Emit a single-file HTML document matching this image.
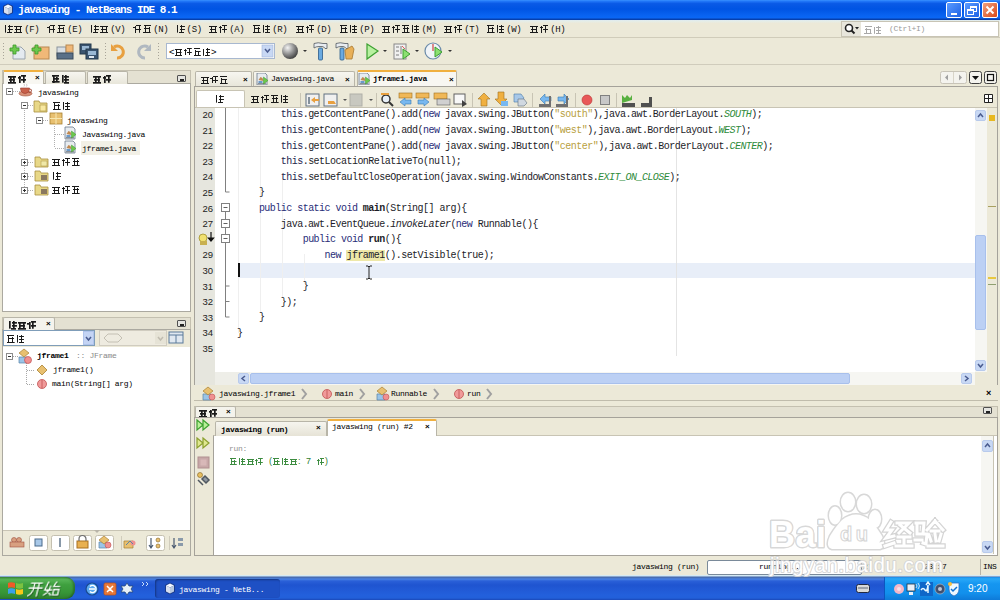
<!DOCTYPE html>
<html><head><meta charset="utf-8">
<style>
*{box-sizing:border-box;margin:0;padding:0}
html,body{width:1000px;height:600px;overflow:hidden;background:#ECE9D8;font-family:"Liberation Sans",sans-serif;font-size:10px;color:#000}
.a{position:absolute}
.t{position:absolute;white-space:pre;line-height:1}
.m{font-family:"Liberation Mono",monospace;letter-spacing:-0.31px}
/* title bar */
#title{left:0;top:0;width:1000px;height:20px;background:linear-gradient(#3A92FF 0,#2278F8 6%,#0A5AE6 18%,#0054E3 45%,#0862F0 75%,#0A66F4 88%,#0846B8 96%,#04349A 100%)}
.tbtn{top:2px;width:16px;height:16px;border:1px solid #fff;border-radius:2px;background:linear-gradient(135deg,#5A9BFF,#1E62E6)}
/* menubar */
.mi{top:24px;font-size:10px;color:#111}
/* panel */
.pbord{border:1px solid #ABA9A0;background:#fff}
.tab{height:15px;border:1px solid #B8B5A8;border-bottom:none;background:linear-gradient(#F7F6F0,#E8E6DA);border-radius:2px 2px 0 0}
.tab.act{background:#F8F7F2;border-top:2px solid #F0B040}
.code{font-family:"Liberation Mono",monospace;font-size:10px;letter-spacing:-0.53px;color:#1c1c28}
.ln{font-size:9.5px;color:#222;text-align:right;width:18px}
.kw{color:#282C78}
.str{color:#B8A040}
.it{font-style:italic;color:#2E8B3A}
.fold{width:8px;height:8px;border:1px solid #888;background:#fff}
.fold:after{content:"";position:absolute;left:1px;top:3px;width:4px;height:1px;background:#555}
.ico{position:absolute}
.g{display:inline-block;width:.9em;height:.9em;margin-right:.06em;vertical-align:-0.06em;color:transparent!important;--gc:#1a1a1a;--w:1px;background-repeat:no-repeat;background-image:linear-gradient(var(--gc),var(--gc)),linear-gradient(var(--gc),var(--gc)),linear-gradient(var(--gc),var(--gc)),linear-gradient(var(--gc),var(--gc)),linear-gradient(var(--gc),var(--gc))}
.b .g{--w:1.7px}
.gy .g{--gc:#a8a8a8}.gg .g{--gc:#3C8C40}
.g0{background-size:80% var(--w),70% var(--w),var(--w) 80%,var(--w) 60%,85% var(--w);background-position:50% 8%,60% 45%,30% 90%,75% 80%,50% 92%}
.g1{background-size:var(--w) 85%,55% var(--w),55% var(--w),var(--w) 90%,60% var(--w);background-position:15% 60%,90% 15%,90% 55%,65% 50%,95% 95%}
.g2{background-size:90% var(--w),var(--w) 70%,var(--w) 70%,70% var(--w),90% var(--w);background-position:50% 20%,25% 75%,75% 75%,50% 55%,50% 95%}
.g3{background-size:35% var(--w),var(--w) 80%,60% var(--w),var(--w) 75%,60% var(--w);background-position:5% 30%,20% 80%,95% 10%,70% 60%,95% 60%}
</style></head><body>

<!-- TITLE BAR -->
<div id="title" class="a"></div>
<svg class="a" style="left:2px;top:3px" width="12" height="13"><path d="M6 0.5l5 2.5v7l-5 2.5-5-2.5v-7z" fill="#1A3A8A"/><path d="M6 1.5l4 2-4 2-4-2z" fill="#F4F8FF"/><path d="M2 3.5l4 2v6l-4-2z" fill="#D8E0F0"/><path d="M10 3.5l-4 2v6l4-2z" fill="#B8C8E0"/></svg>
<div class="t" style="left:18px;top:5px;font-size:11px;font-weight:bold;color:#fff;letter-spacing:-0.93px;font-family:'Liberation Mono',monospace">javaswing - NetBeans IDE 8.1</div>
<div class="a tbtn" style="left:946px"><div class="a" style="left:4px;top:10px;width:6px;height:2px;background:#fff"></div></div>
<div class="a tbtn" style="left:964px"><div class="a" style="left:5px;top:3px;width:7px;height:6px;border:1px solid #fff;border-top-width:2px"></div><div class="a" style="left:2px;top:6px;width:7px;height:6px;border:1px solid #fff;border-top-width:2px;background:#3A7CF0"></div></div>
<div class="a tbtn" style="left:982px;background:linear-gradient(135deg,#F0A080,#D84818)"><svg class="a" style="left:0;top:0" width="14" height="14"><path d="M3.5 3.5l7 7 M10.5 3.5l-7 7" stroke="#fff" stroke-width="2"/></svg></div>

<!-- MENU BAR -->
<div class="a" style="left:0;top:20px;width:1000px;height:18px;background:linear-gradient(#DDEBF2 0,#E6EDE6 8%,#ECE9D8 20%);border-bottom:1px solid #D0CCBA"></div>
<div class="t mi" style="left:4px"><span class="g g1">文</span><span class="g g2">件</span><span class="m" style="font-size:9px;margin-left:1px">(F)</span></div>
<div class="t mi" style="left:47px"><span class="g g3">编</span><span class="g g0">辑</span><span class="m" style="font-size:9px;margin-left:1px">(E)</span></div>
<div class="t mi" style="left:90px"><span class="g g1">视</span><span class="g g2">图</span><span class="m" style="font-size:9px;margin-left:1px">(V)</span></div>
<div class="t mi" style="left:133px"><span class="g g3">导</span><span class="g g0">航</span><span class="m" style="font-size:9px;margin-left:1px">(N)</span></div>
<div class="t mi" style="left:176px"><span class="g g1">源</span><span class="m" style="font-size:9px;margin-left:1px">(S)</span></div>
<div class="t mi" style="left:209px"><span class="g g2">重</span><span class="g g3">构</span><span class="m" style="font-size:9px;margin-left:1px">(A)</span></div>
<div class="t mi" style="left:252px"><span class="g g0">运</span><span class="g g1">行</span><span class="m" style="font-size:9px;margin-left:1px">(R)</span></div>
<div class="t mi" style="left:296px"><span class="g g2">调</span><span class="g g3">试</span><span class="m" style="font-size:9px;margin-left:1px">(D)</span></div>
<div class="t mi" style="left:339px"><span class="g g0">分</span><span class="g g1">析</span><span class="m" style="font-size:9px;margin-left:1px">(P)</span></div>
<div class="t mi" style="left:382px"><span class="g g2">团</span><span class="g g3">队</span><span class="g g0">开</span><span class="g g1">发</span><span class="m" style="font-size:9px;margin-left:1px">(M)</span></div>
<div class="t mi" style="left:444px"><span class="g g2">工</span><span class="g g3">具</span><span class="m" style="font-size:9px;margin-left:1px">(T)</span></div>
<div class="t mi" style="left:486px"><span class="g g0">窗</span><span class="g g1">口</span><span class="m" style="font-size:9px;margin-left:1px">(W)</span></div>
<div class="t mi" style="left:530px"><span class="g g2">帮</span><span class="g g3">助</span><span class="m" style="font-size:9px;margin-left:1px">(H)</span></div>
<!-- search box -->
<div class="a" style="left:841px;top:21px;width:158px;height:16px;border:1px solid #C8C4B4;background:#fff"></div>
<div class="a" style="left:842px;top:22px;width:19px;height:14px;background:#E8E6DC"></div>
<svg class="a" style="left:842px;top:22px" width="19" height="14"><circle cx="7" cy="6" r="3.5" fill="#fff" stroke="#222" stroke-width="1.6"/><path d="M9.5 8.5l3 3" stroke="#222" stroke-width="2"/><path d="M13 5h4l-2 2.5z" fill="#222"/></svg>
<div class="t gy" style="left:864px;top:25px;font-size:9.5px;color:#999"><span class="g g0">搜</span><span class="g g1">索</span></div><div class="t m" style="left:889px;top:25px;font-size:8px;color:#999">(Ctrl+I)</div>

<!-- TOOLBAR -->
<div class="a" style="left:0;top:64px;width:1000px;height:1px;background:#D0CCBC"></div>
<svg class="a" style="left:0;top:38px" width="460" height="26" viewBox="0 0 460 26">
 <g fill="#A8A498"><rect x="3" y="5" width="1" height="1"/><rect x="3" y="8" width="1" height="1"/><rect x="3" y="11" width="1" height="1"/><rect x="3" y="14" width="1" height="1"/><rect x="3" y="17" width="1" height="1"/><rect x="3" y="20" width="1" height="1"/>
 <rect x="105" y="5" width="1" height="1"/><rect x="105" y="8" width="1" height="1"/><rect x="105" y="11" width="1" height="1"/><rect x="105" y="14" width="1" height="1"/><rect x="105" y="17" width="1" height="1"/><rect x="105" y="20" width="1" height="1"/>
 <rect x="158" y="5" width="1" height="1"/><rect x="158" y="8" width="1" height="1"/><rect x="158" y="11" width="1" height="1"/><rect x="158" y="14" width="1" height="1"/><rect x="158" y="17" width="1" height="1"/><rect x="158" y="20" width="1" height="1"/></g>
 <!-- new file -->
 <path d="M13 9h8l4 4v8h-12z" fill="#E4EAF0" stroke="#9AA4AC"/>
 <path d="M10 10h3v-3h3v3h3v3h-3v3h-3v-3h-3z" fill="#6CC84C" stroke="#3C9A2C" stroke-width="0.8"/>
 <!-- new project -->
 <rect x="34" y="9" width="15" height="12" fill="#F0B878" stroke="#B88850"/>
 <path d="M32 10h3v-3h3v3h3v3h-3v3h-3v-3h-3z" fill="#6CC84C" stroke="#3C9A2C" stroke-width="0.8"/>
 <!-- open project -->
 <rect x="57" y="9" width="9" height="9" fill="#D8DEE4" stroke="#8A949C"/>
 <rect x="66" y="7" width="7" height="7" fill="#F0B878" stroke="#B88850"/>
 <rect x="57" y="15" width="16" height="6" fill="#5A7088" stroke="#3A4A5A"/>
 <!-- save -->
 <rect x="80" y="6" width="11" height="10" fill="#3A5470" stroke="#22384C"/><rect x="82" y="8" width="7" height="4" fill="#9AB8D4"/>
 <rect x="86" y="11" width="12" height="10" fill="#3A5470" stroke="#22384C"/><rect x="88" y="13" width="8" height="4" fill="#9AB8D4"/><rect x="89" y="18" width="5" height="2" fill="#E0E8F0"/>
 <!-- undo -->
 <path d="M114 9 A6 6 0 1 1 117 20" fill="none" stroke="#E8A040" stroke-width="3"/>
 <path d="M111 6v7h7z" fill="#E8A040"/>
 <!-- redo -->
 <path d="M148 9 A6 6 0 1 0 145 20" fill="none" stroke="#B0B8C0" stroke-width="3"/>
 <path d="M151 6v7h-7z" fill="#B0B8C0"/>
 <!-- combo -->
 <rect x="166.5" y="5.5" width="108" height="15" fill="#fff" stroke="#A8B8D0"/>
 <rect x="262" y="7" width="11" height="12" fill="#C8D8F4" stroke="#A0B4D8" stroke-width="0.6"/>
 <path d="M265 11l2.5 3 2.5-3" fill="none" stroke="#4A5C90" stroke-width="1.5"/>
 <!-- globe -->
 <defs><radialGradient id="gl" cx="0.35" cy="0.3" r="0.8"><stop offset="0" stop-color="#F4F4F4"/><stop offset="0.5" stop-color="#909090"/><stop offset="1" stop-color="#303030"/></radialGradient></defs>
 <circle cx="290" cy="13" r="8" fill="url(#gl)"/>
 <path d="M303 12h4l-2 2z" fill="#333"/>
 <!-- hammer -->
 <rect x="318.5" y="10" width="4" height="12" rx="1" fill="#6AAAE0" stroke="#2A5A8A" stroke-width="0.8"/>
 <path d="M314 5.5q4-1.5 9 0h4v5h-2q-1-2-3-2h-3q-3 0-5 1.5z" fill="#E8ECF0" stroke="#505860" stroke-width="0.8"/>
 <!-- clean build -->
 <rect x="340" y="10" width="4" height="12" rx="1" fill="#6AAAE0" stroke="#2A5A8A" stroke-width="0.8"/>
 <path d="M336 5.5q4-1.5 9 0h3v5h-2q-1-2-3-2h-2q-3 0-5 1.5z" fill="#E8ECF0" stroke="#505860" stroke-width="0.8"/>
 <path d="M345 12l7-4 2 3-2 10h-6z" fill="#E8B058" stroke="#A87830" stroke-width="0.8"/>
 <!-- run -->
 <path d="M367 6l11 7-11 8z" fill="#B8F0A0" stroke="#3CA030" stroke-width="1.2"/>
 <path d="M383 12h4l-2 2z" fill="#333"/>
 <!-- test -->
 <rect x="394" y="6" width="12" height="15" fill="#F0F0F0" stroke="#888"/>
 <path d="M396 9h3 M396 13h3 M396 17h3 M401 8v8" stroke="#606060" stroke-width="0.8"/><path d="M402 8l3 3" stroke="#E06060"/>
 <path d="M403 11l7 5-7 5z" fill="#8CE070" stroke="#3CA030"/>
 <path d="M415 12h4l-2 2z" fill="#333"/>
 <!-- profile -->
 <circle cx="433" cy="13" r="8" fill="#F0F4F8" stroke="#6A8AA8" stroke-width="1.2"/>
 <path d="M433 6v7" stroke="#D04040" stroke-width="1.2"/>
 <path d="M435 9l7 5-7 5z" fill="#8CE070" stroke="#3CA030"/>
 <path d="M448 12h4l-2 2z" fill="#333"/>
</svg>
<div class="t" style="left:169px;top:47px;font-size:9.5px">&lt;<span class="g g2">默</span><span class="g g3">认</span><span class="g g0">配</span><span class="g g1">置</span>&gt;</div>

<!-- LEFT PROJECTS PANEL -->
<div class="a" style="left:2px;top:70px;width:189px;height:14px;border:1px solid #C4C0B0;border-bottom:none;background:#E4E1D2"></div>
<div class="a pbord" style="left:2px;top:83px;width:189px;height:229px"></div>
<div class="a tab act" style="left:3px;top:70px;width:41px;height:14px"></div>
<div class="a tab" style="left:45px;top:71px;width:41px;height:13px"></div>
<div class="a tab" style="left:87px;top:71px;width:41px;height:13px"></div>
<div class="b t" style="left:8px;top:74px;font-size:10px;font-weight:bold"><span class="g g2">项</span><span class="g g3">目</span></div>
<div class="t" style="left:35px;top:74px;font-size:8px;font-weight:bold">×</div>
<div class="b t" style="left:51px;top:74px;font-size:10px;font-weight:bold"><span class="g g0">文</span><span class="g g1">件</span></div>
<div class="b t" style="left:93px;top:74px;font-size:10px;font-weight:bold"><span class="g g2">服</span><span class="g g3">务</span></div>
<div class="a" style="left:177px;top:75px;width:9px;height:7px;border:1px solid #505050;border-radius:1px;background:#E4E4E0"><div class="a" style="left:2px;top:3px;width:4px;height:2px;background:#222"></div></div>
<svg class="a" style="left:2px;top:83px" width="189" height="120" viewBox="0 0 189 120">
 <g stroke="#B0B0B0" stroke-dasharray="1 1" fill="none">
  <path d="M22.5 25v82 M11 8.5h7 M26 22.5h6 M41 37.5h6 M52.5 43v22 M53 51.5h9 M53 65.5h9 M26 79.5h6 M26 93.5h6 M26 107.5h6"/>
 </g>
 <g fill="#fff" stroke="#8C8C8C" stroke-width="1">
  <rect x="4.5" y="5.5" width="6" height="6"/><rect x="19.5" y="19.5" width="6" height="6"/><rect x="34.5" y="34.5" width="6" height="6"/>
  <rect x="19.5" y="76.5" width="6" height="6"/><rect x="19.5" y="90.5" width="6" height="6"/><rect x="19.5" y="104.5" width="6" height="6"/>
 </g>
 <g stroke="#333" stroke-width="1"><path d="M6 8.5h3 M21 22.5h3 M36 37.5h3 M21 79.5h3 M22.5 78v3 M21 93.5h3 M22.5 92v3 M21 107.5h3 M22.5 106v3"/></g>
 <!-- coffee cup -->
 <ellipse cx="23.5" cy="10.5" rx="6.5" ry="2.5" fill="#D89078" stroke="#A05038" stroke-width="0.6"/>
 <path d="M18.5 5h9q0 5-4.5 5.5q-4.5-0.5-4.5-5.5z" fill="#C8604A" stroke="#983828" stroke-width="0.6"/>
 <path d="M27.5 6q2.5 0 2 2t-3 1.5" fill="none" stroke="#983828" stroke-width="0.8"/>
 <path d="M22 1q1 1 0 2.5 M24.5 1q1 1 0 2.5" stroke="#B0A0A0" stroke-width="0.6" fill="none"/>
 <!-- source package folder -->
 <path d="M32 18h5l1 2h7v9h-13z" fill="#E8D888" stroke="#A89040" stroke-width="0.8"/>
 <rect x="38" y="22" width="6" height="6" fill="#F8E8A0" stroke="#A89040" stroke-width="0.6"/>
 <!-- package -->
 <rect x="48" y="30" width="12" height="11" fill="#E8C070" stroke="#A88030" stroke-width="0.8"/>
 <path d="M48 35.5h12 M54 30v11" stroke="#F8E8B0"/>
 <!-- java files -->
 <path d="M63 44h8l2 2v10h-10z" fill="#E8ECF0" stroke="#6A7A8A" stroke-width="0.8"/><path d="M64.5 51l2-3 2 1 1 3z" fill="#C08850"/><rect x="64.5" y="52" width="4" height="2" fill="#6A9ACA"/><rect x="64" y="54" width="8" height="1.5" fill="#8A9098"/><path d="M69.5 48l4.5 3.5-4.5 3.5z" fill="#6CC84C" stroke="#3C9A2C" stroke-width="0.5"/>
 <path d="M63 58h8l2 2v10h-10z" fill="#E8ECF0" stroke="#6A7A8A" stroke-width="0.8"/><path d="M64.5 65l2-3 2 1 1 3z" fill="#C08850"/><rect x="64.5" y="66" width="4" height="2" fill="#6A9ACA"/><rect x="64" y="68" width="8" height="1.5" fill="#8A9098"/><path d="M69.5 62l4.5 3.5-4.5 3.5z" fill="#6CC84C" stroke="#3C9A2C" stroke-width="0.5"/>
 <!-- test packages / libs -->
 <path d="M33 74h5l1 2h7v8h-13z" fill="#E8D888" stroke="#A89040" stroke-width="0.8"/><rect x="39" y="78" width="6" height="5" fill="#F0E8A8" stroke="#A89040" stroke-width="0.5"/>
 <path d="M33 88h5l1 2h7v8h-13z" fill="#E8D888" stroke="#A89040" stroke-width="0.8"/><rect x="39" y="92" width="6" height="5" fill="#8A7860"/>
 <path d="M33 102h5l1 2h7v8h-13z" fill="#E8D888" stroke="#A89040" stroke-width="0.8"/><rect x="39" y="106" width="6" height="5" fill="#8A7860"/>
</svg>
<div class="a" style="left:81px;top:141px;width:59px;height:14px;background:#F2F0E6"></div>
<div class="t m" style="left:38px;top:89px;font-size:8px">javaswing</div>
<div class="t" style="left:52px;top:101px;font-size:10px"><span class="g g0">源</span><span class="g g1">包</span></div>
<div class="t m" style="left:67px;top:117px;font-size:8px">javaswing</div>
<div class="t m" style="left:82px;top:131px;font-size:8px">Javaswing.java</div>
<div class="t m" style="left:82px;top:145px;font-size:8px">jframe1.java</div>
<div class="t" style="left:52px;top:157px;font-size:10px"><span class="g g2">测</span><span class="g g3">试</span><span class="g g0">包</span></div>
<div class="t" style="left:52px;top:171px;font-size:10px"><span class="g g1">库</span></div>
<div class="t" style="left:52px;top:185px;font-size:10px"><span class="g g2">测</span><span class="g g3">试</span><span class="g g0">库</span></div>

<!-- NAVIGATOR PANEL -->
<div class="a" style="left:2px;top:317px;width:189px;height:13px;border:1px solid #C4C0B0;border-bottom:none;background:#E4E1D2"></div>
<div class="a pbord" style="left:2px;top:329px;width:189px;height:227px"></div>
<div class="a tab" style="left:3px;top:317px;width:52px;height:13px;background:#F4F3EC"></div>
<div class="b t" style="left:8px;top:320px;font-size:10px;font-weight:bold"><span class="g g1">导</span><span class="g g2">航</span><span class="g g3">器</span></div>
<div class="t" style="left:46px;top:320px;font-size:8px;font-weight:bold">×</div>
<div class="a" style="left:177px;top:320px;width:9px;height:7px;border:1px solid #505050;border-radius:1px;background:#E4E4E0"><div class="a" style="left:2px;top:3px;width:4px;height:2px;background:#222"></div></div>
<div class="a" style="left:3px;top:330px;width:187px;height:17px;background:#ECE9D8"></div>
<div class="a" style="left:3px;top:330px;width:92px;height:16px;border:1px solid #7F9DB9;background:#fff"></div>
<div class="a" style="left:83px;top:331px;width:11px;height:14px;background:#C4D4F4;border:1px solid #B0C4EC"></div>
<svg class="a" style="left:83px;top:331px" width="11" height="14"><path d="M3 6l2.5 3 2.5-3" fill="none" stroke="#4A5C90" stroke-width="1.5"/></svg>
<div class="t" style="left:6px;top:334px;font-size:10px"><span class="g g0">成</span><span class="g g1">员</span></div>
<div class="a" style="left:99px;top:330px;width:68px;height:16px;border:1px solid #D0CCC0;background:#EEEBE0"></div>
<svg class="a" style="left:99px;top:330px" width="90" height="16">
 <path d="M5 8l4-4h10l4 4-4 4h-10z" fill="none" stroke="#C4C0B4"/>
 <rect x="56" y="2" width="11" height="12" fill="#E6E3D6"/>
 <path d="M59 7l2.5 3 2.5-3" fill="none" stroke="#C0BCB0" stroke-width="1.5"/>
 <rect x="70" y="2" width="14" height="11" fill="#E0E8F0" stroke="#5A7A9A"/>
 <path d="M70 5h14 M77 5v8" stroke="#5A7A9A"/>
</svg>
<svg class="a" style="left:2px;top:347px" width="150" height="45">
 <g stroke="#A8A8A8" stroke-dasharray="1 1" fill="none"><path d="M11 9.5h6 M24.5 14v23 M25 23.5h8 M25 37.5h8"/></g>
 <rect x="4.5" y="6.5" width="6" height="6" fill="#fff" stroke="#8C8C8C"/><path d="M6 9.5h3" stroke="#333"/>
 <path d="M17 10h8v6h-8z" fill="#9AC4E8" stroke="#5A84A8" stroke-width="0.7"/>
 <path d="M22 2l5 4-5 4-5-4z" fill="#E8C070" stroke="#A88030" stroke-width="0.7"/>
 <circle cx="26" cy="13" r="3.5" fill="#F09090" stroke="#C05050" stroke-width="0.7"/>
 <path d="M40 18l5 5-5 5-5-5z" fill="#E8C070" stroke="#A88030" stroke-width="0.8"/>
 <circle cx="40" cy="37" r="4.5" fill="#F09A9A" stroke="#C05050" stroke-width="0.8"/><path d="M40 33v8" stroke="#C05050" stroke-width="0.8"/>
</svg>
<div class="t m" style="left:37px;top:352px;font-size:8px;font-weight:bold">jframe1</div>
<div class="t m" style="left:76px;top:352px;font-size:8px;color:#8A8A8A">:: JFrame</div>
<div class="t m" style="left:53px;top:366px;font-size:8px">jframe1()</div>
<div class="t m" style="left:52px;top:380px;font-size:8px">main(String[] arg)</div>
<!-- navigator bottom toolbar -->
<div class="a" style="left:3px;top:530px;width:187px;height:25px;background:#ECE9D8;border-top:1px solid #C8C4B4"></div>
<svg class="a" style="left:0;top:528px" width="192" height="28">
 <path d="M94 2l3 3 3-3z" fill="#B8B4A8"/>
 <g fill="#fff" stroke="#C4C0B0"><rect x="29.5" y="7.5" width="18" height="15" rx="2"/><rect x="51.5" y="7.5" width="18" height="15" rx="2"/><rect x="73.5" y="7.5" width="18" height="15" rx="2"/><rect x="95.5" y="7.5" width="18" height="15" rx="2"/><rect x="146.5" y="7.5" width="18" height="15" rx="2"/></g>
 <g fill="#D8A080" stroke="#A05040" stroke-width="0.6"><circle cx="14" cy="12" r="2.5"/><circle cx="19" cy="12" r="2.5"/><rect x="10" y="14" width="14" height="5"/></g>
 <rect x="35" y="11" width="7" height="7" fill="#A8C8E8" stroke="#4A6A8A"/>
 <rect x="59" y="10" width="2" height="9" fill="#8898A8"/>
 <rect x="77" y="13" width="11" height="7" fill="#E8B050" stroke="#A87020"/><path d="M79 13v-2a3.5 3.5 0 0 1 7 0v2" fill="none" stroke="#707070" stroke-width="1.2"/>
 <path d="M99 14h8v6h-8z" fill="#9AC4E8" stroke="#5A84A8" stroke-width="0.7"/><path d="M104 8l5 4-5 4-5-4z" fill="#E8C070" stroke="#A88030" stroke-width="0.7"/><circle cx="108" cy="17" r="3" fill="#F09090" stroke="#C05050" stroke-width="0.6"/>
 <path d="M124 13h9v7h-9z" fill="#E8C070" stroke="#A88030" stroke-width="0.7"/><circle cx="133" cy="15" r="2.5" fill="#F09090"/><path d="M126 17l4-4 3 3" fill="none" stroke="#5A84A8"/>
 <path d="M151 10v9 M149 17l2 3 2-3" stroke="#4A5A70" fill="none" stroke-width="1.2"/><circle cx="158" cy="12" r="2" fill="#E8C070" stroke="#806020" stroke-width="0.6"/><circle cx="158" cy="18" r="2" fill="#E8C070" stroke="#806020" stroke-width="0.6"/>
 <path d="M174 10v9 M172 17l2 3 2-3" stroke="#4A5A70" fill="none" stroke-width="1.2"/><path d="M178 10h5v3h-5z M178 15h5v3h-5z" fill="#8A9AAA"/>
 <path d="M121.5 8v14 M169.5 8v14" stroke="#D0CCBC"/>
</svg>

<!-- EDITOR -->
<div class="a" style="left:194px;top:70px;width:804px;height:16px;background:#ECE9D8"></div>
<div class="a tab" style="left:195px;top:71px;width:57px;height:15px"></div>
<div class="a tab" style="left:253px;top:71px;width:102px;height:15px"></div>
<div class="a tab act" style="left:357px;top:70px;width:100px;height:16px"></div>
<div class="t" style="left:201px;top:75px;font-size:9.5px"><span class="g g2">起</span><span class="g g3">始</span><span class="g g0">页</span></div>
<div class="t" style="left:243px;top:76px;font-size:8px;font-weight:bold">×</div>
<div class="t m" style="left:271px;top:75px;font-size:8px">Javaswing.java</div>
<div class="t" style="left:345px;top:76px;font-size:8px;font-weight:bold">×</div>
<div class="t m" style="left:373px;top:75px;font-size:8px;font-weight:bold">jframe1.java</div>
<div class="t" style="left:449px;top:76px;font-size:8px;font-weight:bold">×</div>
<svg class="a" style="left:256px;top:73px" width="120" height="12">
 <path d="M1 0h8l2 2v10h-10z" fill="#E8ECF0" stroke="#6A7A8A" stroke-width="0.8"/><path d="M2.5 7l2-3 2 1 1 3z" fill="#C08850"/><rect x="2.5" y="8" width="4" height="2" fill="#6A9ACA"/><rect x="2" y="10" width="8" height="1.5" fill="#8A9098"/><path d="M7.5 4l4.5 3.5-4.5 3.5z" fill="#6CC84C" stroke="#3C9A2C" stroke-width="0.5"/>
 <path d="M103 0h8l2 2v10h-10z" fill="#E8ECF0" stroke="#6A7A8A" stroke-width="0.8"/><path d="M104.5 7l2-3 2 1 1 3z" fill="#C08850"/><rect x="104.5" y="8" width="4" height="2" fill="#6A9ACA"/><rect x="104" y="10" width="8" height="1.5" fill="#8A9098"/><path d="M109.5 4l4.5 3.5-4.5 3.5z" fill="#6CC84C" stroke="#3C9A2C" stroke-width="0.5"/>
</svg>
<svg class="a" style="left:938px;top:70px" width="62" height="16">
 <rect x="2.5" y="1.5" width="26" height="12" rx="2" fill="#F4F3EE" stroke="#C8C4B8"/>
 <path d="M15.5 2v11" stroke="#D8D4C8"/>
 <path d="M10 4.5l-3 3 3 3z M21 4.5l3 3-3 3z" fill="#A0A0A0"/>
 <rect x="31.5" y="1.5" width="12" height="12" rx="2" fill="#F4F3EE" stroke="#404040"/><path d="M34 6h7l-3.5 4z" fill="#111"/>
 <rect x="46.5" y="1.5" width="12" height="12" rx="2" fill="#F4F3EE" stroke="#404040"/><rect x="49.5" y="4.5" width="6" height="6" fill="none" stroke="#111" stroke-width="1.2"/>
</svg>
<div class="a" style="left:194px;top:86px;width:804px;height:300px;border:1px solid #A5A29A;background:#fff"></div>
<div class="a" style="left:195px;top:87px;width:802px;height:21px;background:#ECE9D8;border-bottom:1px solid #C8C4B4"></div>
<div class="a" style="left:196px;top:90px;width:49px;height:17px;background:#fff;border:1px solid #C8C4B4;border-bottom:none;border-radius:2px 2px 0 0"></div>
<div class="t" style="left:215px;top:94px;font-size:10px"><span class="g g1">源</span></div>
<div class="t" style="left:251px;top:94px;font-size:10px"><span class="g g2">历</span><span class="g g3">史</span><span class="g g0">记</span><span class="g g1">录</span></div>
<svg class="a" style="left:296px;top:89.5px" width="400" height="19">
 <g stroke="#C8C4B4"><path d="M4.5 3v14 M80.5 3v14 M176.5 3v14 M236.5 3v14 M279.5 3v14 M320.5 3v14"/></g>
 <!-- 305-320 -->
 <rect x="10" y="4" width="13" height="12" fill="#F0F0F0" stroke="#607080"/><path d="M13 7v7" stroke="#607080" stroke-width="1.5"/><path d="M15 10l4-3v2h4v2h-4v2z" fill="#E8A040"/>
 <rect x="28" y="4" width="13" height="12" fill="#F0F0F0" stroke="#607080"/><path d="M32 11h6l2 3h-8z" fill="#E8A040"/><path d="M47 9h4l-2 2z" fill="#555"/>
 <rect x="54" y="4" width="12" height="12" fill="#C8C8C0" stroke="#B0B0A8"/><path d="M73 9h4l-2 2z" fill="#555"/>
 <!-- search etc 381- -->
 <circle cx="90" cy="9" r="4" fill="#E8F0F8" stroke="#333" stroke-width="1.5"/><path d="M93 12l4 4" stroke="#333" stroke-width="2"/><rect x="85" y="3" width="8" height="2" fill="#E8A040"/>
 <rect x="103" y="3" width="13" height="5" fill="#F0B858" stroke="#A07020" stroke-width="0.6"/><path d="M104 12l5-4v2h6v4h-6v2z" fill="#78B8F0" stroke="#3878B0" stroke-width="0.6"/>
 <rect x="120" y="3" width="13" height="5" fill="#F0B858" stroke="#A07020" stroke-width="0.6"/><path d="M133 12l-5-4v2h-6v4h6v2z" fill="#78B8F0" stroke="#3878B0" stroke-width="0.6"/>
 <rect x="138" y="3" width="13" height="6" fill="#F0B858" stroke="#A07020" stroke-width="0.6"/><rect x="141" y="9" width="13" height="6" fill="#D0D0D0" stroke="#606060" stroke-width="0.6"/>
 <rect x="158" y="4" width="11" height="10" fill="#F8F8F8" stroke="#606060"/><path d="M166 10l5 4-5 3z" fill="#404040"/>
 <!-- arrows 181- -->
 <path d="M182 9l6-6 6 6h-3v7h-6v-7z" fill="#F0B040" stroke="#A07020" stroke-width="0.6"/>
 <path d="M199 9l6 6 6-6h-3v-7h-6v7z" fill="#F0B040" stroke="#A07020" stroke-width="0.6"/><rect x="205" y="11" width="7" height="5" fill="#78B8F0"/>
 <path d="M218 4h7l3 4-3 4h-7z" fill="#A8C8E8" stroke="#4878A8" stroke-width="0.6"/><path d="M222 9h6l3 4-3 3h-6z" fill="#D0D8E0" stroke="#607080" stroke-width="0.6"/>
 <!-- 243- -->
 <path d="M244 9l5-5v3h6v4h-6v3z" fill="#78B8F0" stroke="#3878B0" stroke-width="0.6"/><path d="M243 14h12v3h-12z M253 6h2v11h-2z" fill="#707070"/>
 <path d="M273 9l-5-5v3h-6v4h6v3z" fill="#78B8F0" stroke="#3878B0" stroke-width="0.6"/><path d="M260 14h12v3h-12z M270 6h2v11h-2z" fill="#707070"/>
 <circle cx="291" cy="10" r="5" fill="#E85858" stroke="#B83030" stroke-width="0.6"/>
 <rect x="304.5" y="5.5" width="9" height="9" fill="#C8C8C8" stroke="#808080"/>
 <path d="M326 13v-8l3 3 2-3 3 3 2-3v5z" fill="#58B040"/><path d="M326 13h13v4h-13z" fill="#505050"/>
 <path d="M345 13h8v-6h3v10h-11z" fill="#505050"/>
</svg>
<svg class="a" style="left:984px;top:94px" width="10" height="10"><path d="M0.5 0.5h8v8h-8z M4.5 0.5v8 M0.5 4.5h8" fill="#fff" stroke="#222"/></svg>
<!-- gutter -->
<div class="a" style="left:195px;top:108px;width:20px;height:277px;background:#E6E6DE"></div>
<div class="a" style="left:238px;top:262.6px;width:737px;height:15px;background:#E8EEF8"></div>
<div class="a" style="left:676px;top:108px;width:1px;height:248px;background:#E4E4E4"></div>
<svg class="a" style="left:195px;top:108px" width="120" height="264">
 <g stroke="#EFEFEF"><path d="M43.5 0v225 M65.5 0v205 M87.5 68v122 M109.5 146v30"/></g>
 <g stroke="#808080" fill="none"><path d="M30.5 0v84h4 M30.5 104v7 M30.5 119v8 M30.5 135v74h4 M30.5 178h4 M30.5 193.5h4"/></g>
 <g fill="#fff" stroke="#808080"><rect x="26.5" y="95.5" width="8" height="8"/><rect x="26.5" y="111.5" width="8" height="8"/><rect x="26.5" y="126.5" width="8" height="8"/></g>
 <g stroke="#606060"><path d="M28.5 99.5h4 M28.5 115.5h4 M28.5 130.5h4"/></g>
 <circle cx="8" cy="130" r="4" fill="#F0E070" stroke="#A09030" stroke-width="0.8"/><rect x="5" y="133" width="7" height="4" fill="#C8B050"/>
 <path d="M16 124v8 M13.5 130l2.5 3 2.5-3z" stroke="#111" fill="#111" stroke-width="1.2"/>
</svg>
<div class="a" style="left:238px;top:263px;width:2px;height:14px;background:#111"></div>
<svg class="a" style="left:365px;top:265px" width="8" height="15"><path d="M1 1h2l1 1 1-1h2 M4 2v11 M1 14h2l1-1 1 1h2" stroke="#222" fill="none"/></svg>
<div class="t ln" style="left:195px;top:110.0px">20</div>
<div class="t ln" style="left:195px;top:125.6px">21</div>
<div class="t ln" style="left:195px;top:141.2px">22</div>
<div class="t ln" style="left:195px;top:156.8px">23</div>
<div class="t ln" style="left:195px;top:172.4px">24</div>
<div class="t ln" style="left:195px;top:188.0px">25</div>
<div class="t ln" style="left:195px;top:203.6px">26</div>
<div class="t ln" style="left:195px;top:219.2px">27</div>
<div class="t ln" style="left:195px;top:250.4px">29</div>
<div class="t ln" style="left:195px;top:266.0px">30</div>
<div class="t ln" style="left:195px;top:281.6px">31</div>
<div class="t ln" style="left:195px;top:297.2px">32</div>
<div class="t ln" style="left:195px;top:312.8px">33</div>
<div class="t ln" style="left:195px;top:328.4px">34</div>
<div class="t ln" style="left:195px;top:344.0px">35</div>
<div class="t code" style="left:237px;top:110.3px">        <span style="color:#24244E">this</span>.getContentPane().add(<span class="kw">new</span> javax.swing.JButton(<span class="str">"south"</span>),java.awt.BorderLayout.<span class="it">SOUTH</span>);</div>
<div class="t code" style="left:237px;top:125.9px">        <span style="color:#24244E">this</span>.getContentPane().add(<span class="kw">new</span> javax.swing.JButton(<span class="str">"west"</span>),java.awt.BorderLayout.<span class="it">WEST</span>);</div>
<div class="t code" style="left:237px;top:141.5px">        <span style="color:#24244E">this</span>.getContentPane().add(<span class="kw">new</span> javax.swing.JButton(<span class="str">"center"</span>),java.awt.BorderLayout.<span class="it">CENTER</span>);</div>
<div class="t code" style="left:237px;top:157.1px">        <span style="color:#24244E">this</span>.setLocationRelativeTo(null);</div>
<div class="t code" style="left:237px;top:172.7px">        <span style="color:#24244E">this</span>.setDefaultCloseOperation(javax.swing.WindowConstants.<span class="it">EXIT_ON_CLOSE</span>);</div>
<div class="t code" style="left:237px;top:188.3px">    }</div>
<div class="t code" style="left:237px;top:203.9px">    <span class="kw">public static void</span> <span style="font-weight:bold">main</span>(String[] arg){</div>
<div class="t code" style="left:237px;top:219.5px">        java.awt.EventQueue.<span style="font-style:italic">invokeLater</span>(<span class="kw">new</span> Runnable(){</div>
<div class="t code" style="left:237px;top:235.1px">            <span class="kw">public void</span> <span style="font-weight:bold">run</span>(){</div>
<div class="t code" style="left:237px;top:250.7px">                <span class="kw">new</span> <span style="background:#EEE8A8">jframe1</span>().setVisible(true);</div>
<div class="t code" style="left:237px;top:266.3px"></div>
<div class="t code" style="left:237px;top:281.9px">            }</div>
<div class="t code" style="left:237px;top:297.5px">        });</div>
<div class="t code" style="left:237px;top:313.1px">    }</div>
<div class="t code" style="left:237px;top:328.7px">}</div>
<div class="t code" style="left:237px;top:344.3px"></div>
<!-- scrollbars -->
<div class="a" style="left:975px;top:108px;width:12px;height:264px;background:#F6F6F2"></div>
<div class="a" style="left:975px;top:110px;width:11px;height:11px;border-radius:2px;background:#C8D8F4;border:1px solid #B8CAEC"></div>
<svg class="a" style="left:975px;top:110px" width="11" height="11"><path d="M3 7l2.5-3 2.5 3" fill="none" stroke="#4A5C90" stroke-width="1.5"/></svg>
<div class="a" style="left:975px;top:235px;width:11px;height:95px;border-radius:2px;background:#BCD0F4;border:1px solid #A8C0EC"></div>
<div class="a" style="left:975px;top:360px;width:11px;height:11px;border-radius:2px;background:#C8D8F4;border:1px solid #B8CAEC"></div>
<svg class="a" style="left:975px;top:360px" width="11" height="11"><path d="M3 4l2.5 3 2.5-3" fill="none" stroke="#4A5C90" stroke-width="1.5"/></svg>
<div class="a" style="left:987px;top:108px;width:10px;height:277px;background:#ECE9D8"></div><div class="a" style="left:975px;top:372px;width:22px;height:13px;background:#ECE9D8"></div>
<div class="a" style="left:989px;top:115px;width:6px;height:6px;background:#E8B820"></div>
<div class="a" style="left:988px;top:206px;width:8px;height:1px;background:#A8A060"></div>
<div class="a" style="left:988px;top:277px;width:8px;height:2px;background:#E8C840"></div>
<div class="a" style="left:988px;top:284px;width:8px;height:1px;background:#90A070"></div>
<div class="a" style="left:215px;top:372px;width:760px;height:13px;background:#EEEEE8"></div><div class="a" style="left:250px;top:372px;width:725px;height:13px;background:#F6F6F2"></div>
<div class="a" style="left:238px;top:373px;width:11px;height:11px;border-radius:2px;background:#C8D8F4;border:1px solid #B8CAEC"></div>
<svg class="a" style="left:238px;top:373px" width="11" height="11"><path d="M7 3l-3 2.5 3 2.5" fill="none" stroke="#4A5C90" stroke-width="1.5"/></svg>
<div class="a" style="left:250px;top:373px;width:600px;height:11px;border-radius:2px;background:#BCD0F4;border:1px solid #A8C0EC"></div>
<div class="a" style="left:961px;top:373px;width:11px;height:11px;border-radius:2px;background:#C8D8F4;border:1px solid #B8CAEC"></div>
<svg class="a" style="left:961px;top:373px" width="11" height="11"><path d="M4 3l3 2.5-3 2.5" fill="none" stroke="#4A5C90" stroke-width="1.5"/></svg>
<!-- breadcrumb -->
<div class="a" style="left:194px;top:385px;width:804px;height:16px;background:#ECE9D8;border-bottom:1px solid #C0BCAC"></div>
<svg class="a" style="left:200px;top:386px" width="300" height="16">
 <path d="M3 8h8v6h-8z" fill="#9AC4E8" stroke="#5A84A8" stroke-width="0.7"/><path d="M8 1l5 4-5 4-5-4z" fill="#E8C070" stroke="#A88030" stroke-width="0.7"/><circle cx="12" cy="11" r="3" fill="#F09090" stroke="#C05050" stroke-width="0.6"/>
 <path d="M102 3l4 5-4 5 M160 3l4 5-4 5 M234 3l4 5-4 5 M287 3l4 5-4 5" fill="none" stroke="#A0A0A0" stroke-width="2"/>
 <circle cx="127" cy="8" r="4.5" fill="#F09A9A" stroke="#C05050" stroke-width="0.8"/><path d="M127 4v8" stroke="#C05050" stroke-width="0.8"/>
 <path d="M177 8h8v6h-8z" fill="#9AC4E8" stroke="#5A84A8" stroke-width="0.7"/><path d="M182 1l5 4-5 4-5-4z" fill="#E8C070" stroke="#A88030" stroke-width="0.7"/><circle cx="186" cy="11" r="3" fill="#F09090" stroke="#C05050" stroke-width="0.6"/>
 <circle cx="259" cy="8" r="4.5" fill="#F09A9A" stroke="#C05050" stroke-width="0.8"/><path d="M259 4v8" stroke="#C05050" stroke-width="0.8"/>
</svg>
<div class="t m" style="left:219px;top:390px;font-size:8px">javaswing.jframe1</div>
<div class="t m" style="left:335px;top:390px;font-size:8px">main</div>
<div class="t m" style="left:391px;top:390px;font-size:8px">Runnable</div>
<div class="t m" style="left:467px;top:390px;font-size:8px">run</div>
<div class="t" style="left:986px;top:389px;font-size:9px;font-weight:bold">×</div>

<!-- OUTPUT -->
<div class="a" style="left:194px;top:406px;width:804px;height:12px;background:#E4E1D2;border:1px solid #C4C0B0;border-bottom:none"></div>
<div class="a tab" style="left:195px;top:406px;width:41px;height:12px;background:#F4F3EC"></div>
<div class="b t" style="left:199px;top:408px;font-size:10px;font-weight:bold"><span class="g g2">输</span><span class="g g3">出</span></div>
<div class="t" style="left:226px;top:408px;font-size:8px;font-weight:bold">×</div>
<div class="a" style="left:983px;top:407px;width:9px;height:7px;border:1px solid #505050;border-radius:1px;background:#E4E4E0"><div class="a" style="left:2px;top:3px;width:4px;height:2px;background:#222"></div></div>
<div class="a" style="left:194px;top:417px;width:804px;height:139px;border:1px solid #A5A29A;background:#ECE9D8"></div>
<svg class="a" style="left:195px;top:418px" width="20" height="72">
 <path d="M2 2l6 5-6 5z M8 2l6 5-6 5z" fill="#B8F098" stroke="#3CA030" stroke-width="1.2"/>
 <path d="M2 20l6 5-6 5z M8 20l6 5-6 5z" fill="#E0E890" stroke="#8CA030" stroke-width="1.2"/>
 <rect x="3" y="39" width="11" height="11" fill="#C8A8A8" stroke="#B09090"/><rect x="5.5" y="41.5" width="6" height="6" fill="#D8B8B8"/>
 <circle cx="5" cy="57" r="2.5" fill="#E8C060" stroke="#806020" stroke-width="0.6"/><path d="M3 62l5 5M10 58l4 4-3 3-4-4z" stroke="#505860" fill="#9098A0" stroke-width="1.5"/>
</svg>
<div class="a" style="left:213px;top:435px;width:784px;height:120px;background:#fff;border-left:1px solid #A5A29A;border-top:1px solid #C8C4B4"></div>
<div class="a tab" style="left:215px;top:421px;width:112px;height:15px;background:linear-gradient(#F6F5EF,#E6E3D6)"></div>
<div class="a tab act" style="left:327px;top:419px;width:110px;height:17px;background:#fff"></div>
<div class="t m" style="left:221px;top:426px;font-size:8px;font-weight:bold">javaswing (run)</div>
<div class="t" style="left:316px;top:424px;font-size:8px;font-weight:bold">×</div>
<div class="t m" style="left:332px;top:423px;font-size:8px">javaswing (run) #2</div>
<div class="t" style="left:425px;top:423px;font-size:8px;font-weight:bold">×</div>
<div class="t m" style="left:229px;top:445px;font-size:8px;color:#909090">run:</div>
<div class="t gg" style="left:229px;top:457px;font-size:9px;color:#2E7D32;word-spacing:3px"><span class="g g0">成</span><span class="g g1">功</span><span class="g g2">构</span><span class="g g3">建</span> (<span class="g g0">总</span><span class="g g1">时</span><span class="g g2">间</span>: 7 <span class="g g3">秒</span>)</div>
<div class="a" style="left:981px;top:436px;width:13px;height:118px;background:#F6F6F2;border-right:1px solid #C8C4B4"></div><div class="a" style="left:982px;top:440px;width:11px;height:12px;border-radius:2px;background:#C8D8F4;border:1px solid #B8CAEC"></div>
<svg class="a" style="left:982px;top:440px" width="11" height="12"><path d="M3 7l2.5-3 2.5 3" fill="none" stroke="#4A5C90" stroke-width="1.5"/></svg>
<div class="a" style="left:982px;top:541px;width:11px;height:12px;border-radius:2px;background:#C8D8F4;border:1px solid #B8CAEC"></div>
<svg class="a" style="left:982px;top:541px" width="11" height="12"><path d="M3 5l2.5 3 2.5-3" fill="none" stroke="#4A5C90" stroke-width="1.5"/></svg>

<!-- STATUS BAR -->
<div class="t m" style="left:632px;top:563px;font-size:8px">javaswing (run)</div>
<div class="a" style="left:707px;top:560px;width:155px;height:15px;border:1px solid #7A8A9A;border-radius:2px;background:#fff"></div>
<div class="t m" style="left:759px;top:563px;font-size:8px">running...</div>
<div class="t m" style="left:863px;top:563px;font-size:8px">2)</div>
<div class="t m" style="left:924px;top:563px;font-size:8px">23:17</div>
<div class="a" style="left:980px;top:559px;width:1px;height:16px;background:#B8B4A8"></div>
<div class="t m" style="left:983px;top:563px;font-size:8px">INS</div>

<!-- TASKBAR -->
<div class="a" style="left:0;top:575px;width:1000px;height:25px;background:linear-gradient(#E2F4F8 0,#C8E0F0 4%,#4A6AAA 8%,#4470C0 12%,#4C84E4 16%,#2A60D8 24%,#1F54D0 40%,#2360DC 80%,#2260DA 92%,#1A48B8 100%)"></div>
<div class="a" style="left:0;top:577px;width:75px;height:22px;border-radius:0 9px 9px 0;background:linear-gradient(#3D8E3D 0,#56B456 12%,#3FA03F 35%,#379637 70%,#2E7E2E 100%);box-shadow:inset -2px 0 2px rgba(0,0,0,0.25)"></div>
<svg class="a" style="left:7px;top:580px" width="17" height="17" viewBox="0 0 17 17">
 <path d="M1 3q3-1.5 7 0v5q-4-1.5-7 0z" fill="#F05A28"/>
 <path d="M9 3q3 1.5 7 0v5q-4 1.5-7 0z" fill="#7CC242"/>
 <path d="M1 9q3-1.5 7 0v5q-4-1.5-7 0z" fill="#3AA0E8"/>
 <path d="M9 9q3 1.5 7 0v5q-4 1.5-7 0z" fill="#F8C818"/>
</svg>
<svg class="a" style="left:27px;top:580px" width="36" height="18"><g transform="translate(3 1) skewX(-14)" fill="none" stroke="#fff" stroke-width="1.3" stroke-linecap="round" style="filter:drop-shadow(1px 1px 0.5px rgba(0,0,0,0.35))">
 <path d="M2 2H13 M1 7H14 M5.5 2V8Q5 13 1 15 M10 2V15"/>
 <path d="M19 1L17 9H24 M22 5Q22 11 17 14 M17.5 8.5Q21 11 24 14 M27 1L25 5.5H31 M26 8.5H31V14H26Z"/>
</g></svg>
<svg class="a" style="left:84px;top:580px" width="70" height="18">
 <circle cx="8" cy="9" r="6" fill="#5AA8F0" stroke="#1A4A90" stroke-width="1.2"/><path d="M5 9h6 M6 6.5a3.5 3.5 0 1 1 0 5" stroke="#fff" stroke-width="1.5" fill="none"/>
 <rect x="20" y="3" width="12" height="12" rx="1.5" fill="#E87838" stroke="#B85020" stroke-width="0.8"/><path d="M23 6l3 3-3 3 M29 6l-3 3 3 3" stroke="#fff" stroke-width="1.5" fill="none"/>
 <path d="M43 3l2 3h4l-2 3 2 3h-4l-2 3-2-3h-4l2-3-2-3h4z" fill="#E8F0F8" stroke="#2A4A7A" stroke-width="0.8"/>
 <path d="M58 2l2 2-2 2 M62 2l2 2-2 2" stroke="#C8DCF8" fill="none"/>
</svg>
<div class="a" style="left:155px;top:579px;width:125px;height:19px;border-radius:3px;background:#1E50C4;box-shadow:inset 1px 1px 2px rgba(0,0,0,0.35)"></div>
<svg class="a" style="left:164px;top:582px" width="12" height="13"><path d="M6 0.5l5 2.5v7l-5 2.5-5-2.5v-7z" fill="#1A3A8A"/><path d="M6 1.5l4 2-4 2-4-2z" fill="#F4F8FF"/><path d="M2 3.5l4 2v6l-4-2z" fill="#D8E0F0"/><path d="M10 3.5l-4 2v6l4-2z" fill="#B8C8E0"/></svg>
<div class="t m" style="left:179px;top:586px;font-size:8px;color:#fff">javaswing - NetB...</div>
<svg class="a" style="left:856px;top:583px" width="14" height="11"><rect x="0.5" y="1.5" width="13" height="8" rx="2" fill="#D8D8D8" stroke="#202840"/><path d="M2 5h10" stroke="#606878"/></svg>
<div class="a" style="left:884px;top:577px;width:116px;height:23px;background:linear-gradient(#1C8AE6 0,#28A8F8 8%,#1596F0 30%,#1290EC 70%,#0E7AD8 100%);border-left:1px solid #0B56C0"></div>
<svg class="a" style="left:892px;top:580px" width="70" height="17">
 <circle cx="7" cy="9" r="5" fill="#F4B8C8"/><circle cx="7" cy="9" r="2" fill="#F8E0E8"/>
 <rect x="15" y="4" width="8" height="7" fill="#E8F0F8" stroke="#203040" stroke-width="0.8"/><rect x="17" y="12" width="4" height="3" fill="#E8F0F8"/><path d="M24 4q2 2 0 4 M26 3q3 3 0 6" stroke="#E8F0F8" fill="none" stroke-width="0.8"/>
 <rect x="28" y="2" width="13" height="14" fill="#0E66C8"/><path d="M29 10q2-3 4 0t3-5v8 M34 5l2-3 2 3" stroke="#E8F8FF" stroke-width="1.5" fill="none"/>
 <circle cx="48" cy="9" r="5" fill="#405070" stroke="#A0B0C0" stroke-width="0.8"/><circle cx="48" cy="9" r="2" fill="#C0C8D8"/>
 <path d="M57 3h10v6q0 5-5 7-5-2-5-7z" fill="#F0F8FF" stroke="#3070C0" stroke-width="0.8"/><path d="M59 9l2 2 4-4" stroke="#1070D0" stroke-width="1.5" fill="none"/><circle cx="58" cy="4" r="2" fill="#F8C040"/>
</svg>
<div class="t" style="left:968px;top:584px;font-size:10px;color:#fff">9:20</div>

<!-- WATERMARK -->
<svg class="a" style="left:760px;top:485px" width="200" height="95" viewBox="760 485 200 95">
 <g id="wm" font-family="Liberation Sans">
  <g fill="#D4D4D4" stroke="#D4D4D4" stroke-width="3" stroke-linejoin="round" opacity="0.9">
   <text x="769" y="547" font-size="36" font-weight="bold" textLength="57">Bai</text>
   <ellipse cx="835" cy="515.5" rx="6" ry="9"/><ellipse cx="848" cy="502" rx="7" ry="9"/><ellipse cx="864" cy="504" rx="7" ry="9"/><ellipse cx="875" cy="519" rx="6" ry="9"/>
   <path d="M832 549q-7-2-2-13q6-10 12-16q14-11 28 0q6 6 12 16q5 11-2 13z"/>
   <text x="770" y="572" font-size="20" textLength="173" stroke-width="2.2">jingyan.baidu.com</text>
  </g>
  <g fill="#fff">
   <text x="769" y="547" font-size="36" font-weight="bold" textLength="57">Bai</text>
   <ellipse cx="835" cy="515.5" rx="6" ry="9"/><ellipse cx="848" cy="502" rx="7" ry="9"/><ellipse cx="864" cy="504" rx="7" ry="9"/><ellipse cx="875" cy="519" rx="6" ry="9"/>
   <path d="M832 549q-7-2-2-13q6-10 12-16q14-11 28 0q6 6 12 16q5 11-2 13z"/>
   <text x="770" y="572" font-size="20" textLength="173">jingyan.baidu.com</text>
  </g>
  <text x="840" y="541" font-size="20" font-weight="bold" fill="#fff" stroke="#D4D4D4" stroke-width="1" textLength="28">du</text>
 </g>
 <g fill="none" stroke-linecap="square">
  <g stroke="#D4D4D4" stroke-width="5.5">
   <path d="M891 522l-5 8h6l-6 8 8-2 M885 546l9-3 M897 523h12l-10 10 M900 525l10 8 M898 537h12 M904 537v9 M896 546h16"/>
   <path d="M916 523h8l-1 11 M917 523v11h10l-1 10-3-1 M915 540h7 M935 521l-8 9 M935 521l8 9 M931 531h8 M929 535l2 6 M935 534l1 7 M941 534l-2 7 M928 546h15"/>
  </g>
  <g stroke="#fff" stroke-width="3">
   <path d="M891 522l-5 8h6l-6 8 8-2 M885 546l9-3 M897 523h12l-10 10 M900 525l10 8 M898 537h12 M904 537v9 M896 546h16"/>
   <path d="M916 523h8l-1 11 M917 523v11h10l-1 10-3-1 M915 540h7 M935 521l-8 9 M935 521l8 9 M931 531h8 M929 535l2 6 M935 534l1 7 M941 534l-2 7 M928 546h15"/>
  </g>
 </g>
</svg>
</body></html>
